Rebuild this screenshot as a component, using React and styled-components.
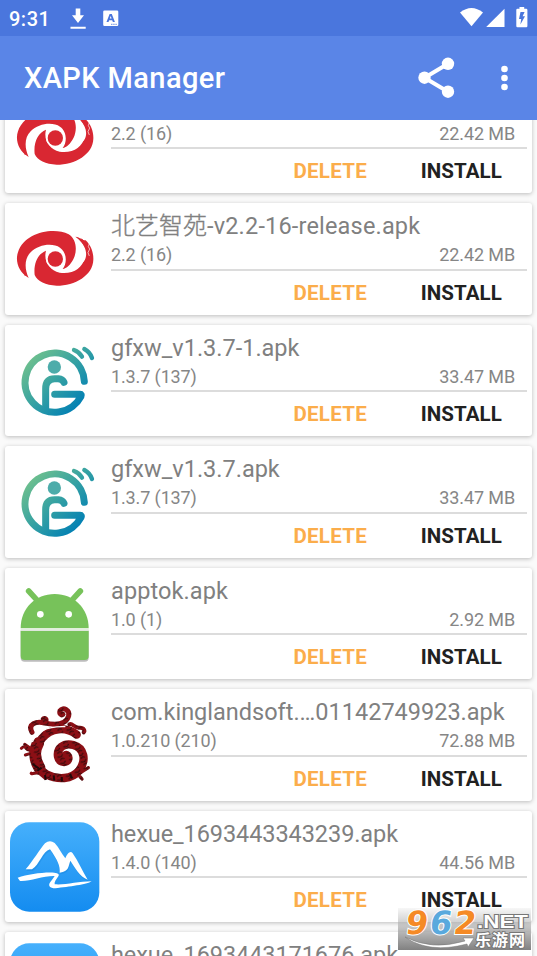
import React from 'react'
import styled, { createGlobalStyle } from 'styled-components'

const GlobalStyle = createGlobalStyle`
  body {
    margin: 0;
    background: #fafafa;
    font-family: Roboto, 'Noto Sans CJK SC', sans-serif;
  }
`

const Screen = styled.div`
  position: relative;
  display: flex;
  flex-direction: column;
  width: 537px;
  height: 956px;
  overflow: hidden;
`

const StatusBar = styled.div`
  flex: none;
  display: flex;
  align-items: center;
  height: 36px;
  box-sizing: border-box;
  padding: 0 9px 0 9px;
  background: #4a76dd;
  color: #fff;
`

const Clock = styled.span`
  width: 61px;
  font-size: 20px;
  line-height: 36px;
  font-weight: 500;
  letter-spacing: 0.5px;
  padding-top: 1px;
`

const StatusIcons = styled.svg`
  display: block;
  margin-left: ${({ $push }) => ($push ? 'auto' : 0)};
`

const AppBar = styled.div`
  flex: none;
  display: flex;
  align-items: center;
  height: 83.5px;
  box-sizing: border-box;
  padding: 0 27.5px 0 24px;
  background: #5a85e7;
  color: #fff;
`

const AppTitle = styled.h1`
  flex: 1;
  margin: 0;
  font-size: 29px;
  font-weight: 500;
  line-height: 40px;
  letter-spacing: 0.4px;
`

const List = styled.div`
  flex: 1;
  overflow: hidden;
`

const Cards = styled.div`
  display: flex;
  flex-direction: column;
  gap: 10px;
  margin: -38px 5px 0;
`

const Card = styled.div`
  flex: none;
  display: flex;
  height: 111.5px;
  box-sizing: border-box;
  padding: 0 5px;
  border-radius: 3px;
  background: #fff;
  box-shadow: 0 1px 4px rgba(0, 0, 0, 0.25);
`

const Icon = styled.svg`
  flex: none;
  width: 90px;
  height: 90px;
  margin: 11px 11px 0 0;
  overflow: visible;
`

const Info = styled.div`
  flex: 1;
  min-width: 0;
`

const Name = styled.div`
  height: 39px;
  padding-top: 3px;
  box-sizing: border-box;
  line-height: 40px;
  font-size: 23.5px;
  letter-spacing: ${({ $spacing }) => $spacing || 0}px;
  color: #808080;
  white-space: nowrap;
`

/* a hairline stroke brings the light hanzi up to the weight of the latin text */
const Hanzi = styled.span`
  font-family: 'Noto Sans CJK SC', sans-serif;
  font-weight: 300;
  font-size: 24px;
  line-height: 1;
  letter-spacing: 0;
  -webkit-text-stroke: 0.35px #808080;
`

const Meta = styled.div`
  display: flex;
  justify-content: space-between;
  height: 28.5px;
  box-sizing: border-box;
  padding-right: 12px;
  line-height: 26px;
  font-size: 18px;
  letter-spacing: -0.12px;
  color: #868686;
  border-bottom: 2px solid #dcdcdc;
`

const Actions = styled.div`
  display: flex;
  justify-content: flex-end;
  gap: 53.5px;
  padding: 9px 25px 0 0;
`

const Action = styled.span`
  font-size: 20.5px;
  line-height: 26px;
  font-weight: 700;
  letter-spacing: ${({ $accent }) => ($accent ? 0.3 : 0.1)}px;
  color: ${({ $accent }) => ($accent ? '#fbad4b' : '#212121')};
`

const Watermark = styled.div`
  position: absolute;
  left: 398px;
  top: 908px;
  width: 133px;
  height: 42px;
  background: linear-gradient(rgba(200, 200, 200, 0.15), rgba(170, 170, 170, 0.75) 50%, rgba(125, 125, 125, 0.97));
`

const SwirlIcon = () => (
  <Icon viewBox="0 0 270 270">
    <g fill="#d92732">
      <path d="M56 192C25 175 15 140 24 115C42 56 130 38 176 61C201 76 202 113 190 136C181 153 170 164 158 165C172 148 171 115 150 101C128 86 85 91 62 115C43 133 43 165 56 192Z" />
      <path d="M74 183C70 148 84 119 108 110C100 139 117 169 149 176C190 181 216 163 224 132C229 107 219 85 196 68C211 70 219 80 227 79C242 93 251 115 250 137C249 184 195 215 140 215C107 214 82 202 74 183Z" />
      <circle cx="136" cy="135" r="23" />
    </g>
    {/* white band on the right between the two arms */}
    <path d="M202 74C222 98 222 132 207 152C195 167 175 174 152 172C192 158 204 120 202 74Z" fill="#fff" />
    <path d="M204 76C228 96 235 122 222 142C210 160 185 170 160 170C190 160 208 135 204 76Z" fill="#fff" />
    <circle cx="136" cy="135" r="27" fill="none" stroke="#fff" strokeWidth="3" />
    <path d="M238 88l-3 10 4 7-5 11 4 10" fill="none" stroke="#fff" strokeWidth="2" />
    <path d="M214 74l9 9M43 178l3 8" stroke="#d92732" strokeWidth="3" />
  </Icon>
)

const RingIcon = () => (
  <Icon viewBox="0 0 270 270">
    <defs>
      <linearGradient id="ring" gradientUnits="userSpaceOnUse" x1="60" y1="60" x2="205" y2="205">
        <stop offset="0" stopColor="#70c18d" />
        <stop offset="0.5" stopColor="#38a3a2" />
        <stop offset="1" stopColor="#0582b3" />
      </linearGradient>
    </defs>
    <g fill="none" stroke="url(#ring)" strokeWidth="21" strokeLinecap="round" strokeLinejoin="round">
      <path d="M223 136A89 89 0 1 0 213 181Q216 175 210 175H134" />
      <path d="M107 218V158Q107 128 134 128H145Q158 129 162 139" />
      <path d="M192 42Q208 48 216 62M223 39Q240 48 246 66" strokeWidth="13" />
    </g>
    <circle cx="133" cy="93" r="20" fill="#4dacaa" />
  </Icon>
)

const RobotIcon = () => (
  <Icon viewBox="0 0 270 270">
    <path d="M32 151H236V233Q236 245 224 245H44Q32 245 32 233Z" fill="#bcbcbc" transform="translate(0 3)" />
    <g fill="#77c25a">
      <path d="M32 148C32 88 76 45 134 45C192 45 236 88 236 148Z" />
      <path d="M32 156H236V231Q236 243 224 243H44Q32 243 32 231Z" />
      <path d="M56 36L79 61M211 36L188 61" stroke="#77c25a" strokeWidth="17" strokeLinecap="round" />
    </g>
    <path d="M32 152H236" stroke="#e3eedf" strokeWidth="7" />
    <circle cx="91" cy="106" r="10" fill="#fff" />
    <circle cx="176" cy="106" r="10" fill="#fff" />
  </Icon>
)

const DragonIcon = () => (
  <Icon viewBox="0 0 270 270">
    <defs>
      <pattern id="scales" width="29" height="21" patternUnits="userSpaceOnUse" patternTransform="rotate(-24)">
        <rect width="29" height="21" fill="#8c0f15" />
        <path d="M2 5L13 8 20 3M6 16l8-3 6 4" fill="none" stroke="#3a0a0c" strokeWidth="3.5" />
      </pattern>
    </defs>
    <g fill="none" stroke="url(#scales)" strokeLinecap="round">
      <path d="M200 104C166 78 122 84 96 115C68 152 75 204 110 223C143 241 186 238 207 212C231 180 222 144 190 135C160 127 140 146 144 170C148 190 172 190 175 177C177 168 170 163 166 166" strokeWidth="25" strokeLinejoin="round" />
      <path d="M84 130C72 150 73 178 88 203" strokeWidth="36" />
      <path d="M66 97C52 72 79 62 104 69C137 76 169 73 176 48C180 29 159 20 150 32C147 41 154 47 159 43" strokeWidth="15" />
      <path d="M98 57C104 49 115 58 107 65M178 73C187 67 193 85 208 83C223 82 225 94 221 97" strokeWidth="12" />
      <path d="M60 151C45 152 49 132 34 145M59 161L46 165M61 145L44 133" strokeWidth="9" />
      <path d="M64 220C70 224 80 212 92 223L106 235M207 221L235 203M210 230L216 237" strokeWidth="10" />
    </g>
    <path d="M67 126C81 92 119 78 166 80" fill="none" stroke="#fff" strokeWidth="4" />
    <path d="M68 192l18 13M82 212l13-9M105 225l2 15M131 226l2 16M155 231l1 12M180 222l6 13" stroke="#210809" strokeWidth="6" />
  </Icon>
)

const MountainIcon = () => (
  <Icon viewBox="0 0 270 270">
    <defs>
      <linearGradient id="sky" x1="0" y1="0" x2="0" y2="1">
        <stop offset="0" stopColor="#46b0fc" />
        <stop offset="1" stopColor="#148cf0" />
      </linearGradient>
    </defs>
    <rect x="0" y="1" width="268" height="268" rx="58" fill="url(#sky)" />
    <path
      d="M47 142C67 120 91 79 105 64Q119 52 134 63C148 77 154 95 166 109C172 95 181 84 188 94C205 118 217 148 233 173C209 163 195 138 181 116C174 134 178 147 149 152C152 133 141 112 120 82C98 87 88 130 66 142Z"
      fill="#0872ca"
      opacity="0.25"
      transform="translate(2 5)"
    />
    <g fill="#fff">
      <path d="M47 142C67 120 91 79 105 64Q119 52 134 63C148 77 154 95 166 109C172 95 181 84 188 94C205 118 217 148 233 173C209 163 195 138 181 116C174 134 178 147 149 152C152 133 141 112 120 82C98 87 88 130 66 142Z" />
      <path d="M23 167C54 157 99 150 133 152Q151 154 145 163C139 172 132 180 134 187C164 190 205 178 245 178C231 188 177 194 136 199C119 199 113 190 121 180Q129 170 134 162C99 161 59 179 30 177Z" />
    </g>
  </Icon>
)

const icons = {
  swirl: SwirlIcon,
  ring: RingIcon,
  robot: RobotIcon,
  dragon: DragonIcon,
  mountain: MountainIcon,
}

const apks = [
  { id: 1, icon: 'swirl', hanzi: '北艺智苑', name: '-v2.2-16-release.apk', spacing: 0.18, version: '2.2 (16)', size: '22.42 MB' },
  { id: 2, icon: 'swirl', hanzi: '北艺智苑', name: '-v2.2-16-release.apk', spacing: 0.18, version: '2.2 (16)', size: '22.42 MB' },
  { id: 3, icon: 'ring', name: 'gfxw_v1.3.7-1.apk', version: '1.3.7 (137)', size: '33.47 MB' },
  { id: 4, icon: 'ring', name: 'gfxw_v1.3.7.apk', version: '1.3.7 (137)', size: '33.47 MB' },
  { id: 5, icon: 'robot', name: 'apptok.apk', spacing: 0.1, version: '1.0 (1)', size: '2.92 MB' },
  { id: 6, icon: 'dragon', name: 'com.kinglandsoft.…01142749923.apk', version: '1.0.210 (210)', size: '72.88 MB' },
  { id: 7, icon: 'mountain', name: 'hexue_1693443343239.apk', spacing: -0.08, version: '1.4.0 (140)', size: '44.56 MB' },
  { id: 8, icon: 'mountain', name: 'hexue_1693443171676.apk', spacing: -0.08, version: '1.4.0 (140)', size: '44.56 MB' },
]

const ApkCard = ({ apk }) => {
  const ApkIcon = icons[apk.icon]
  return (
    <Card>
      <ApkIcon />
      <Info>
        <Name $spacing={apk.spacing}>
          {apk.hanzi && <Hanzi>{apk.hanzi}</Hanzi>}
          {apk.name}
        </Name>
        <Meta>
          <span>{apk.version}</span>
          <span>{apk.size}</span>
        </Meta>
        <Actions>
          <Action $accent>DELETE</Action>
          <Action>INSTALL</Action>
        </Actions>
      </Info>
    </Card>
  )
}

const App = () => (
  <Screen>
    <GlobalStyle />
    <StatusBar>
      <Clock>9:31</Clock>
      <StatusIcons width="50" height="36" fill="#fff">
        <path d="M5.7 8.5h4.6v6.7h3.7L8 23l-6-7.8h3.7zM.5 26.7h15.2v2H.5z" />
        <path fillRule="evenodd" d="M34.5 10.5h12.5q1.3 0 1.3 1.3v13q0 1.3-1.3 1.3h-12.5q-1.3 0-1.3-1.3v-13q0-1.3 1.3-1.3zM39.6 14L36.5 22h2l.7-1.8h3l.7 1.8h2L41.8 14zM39.8 18.5l.9-2.6.9 2.6z" />
        <path d="M41 24.3h6" stroke="#4a76dd" strokeWidth="0.8" strokeDasharray="1.5 0.7" />
      </StatusIcons>
      <StatusIcons $push width="68" height="36" fill="#fff">
        <path d="M0 12.6Q11.5 3.5 23 12.6L11.5 26.3z" />
        <path d="M44.5 8.8V27H26.2z" />
        <path fillRule="evenodd" d="M59.5 7h4.7v1.8h2q1.2 0 1.2 1.2v16q0 1.2-1.2 1.2h-8.7q-1.2 0-1.2-1.2V10q0-1.2 1.2-1.2h2zM60.5 12l-1.5 7h2.2l-.8 5.5 4.6-8.3h-2.4l2-4.2z" />
      </StatusIcons>
    </StatusBar>
    <AppBar>
      <AppTitle>XAPK Manager</AppTitle>
      <svg width="92" height="44" fill="#fff">
        <path d="M30 7.8L6.5 21.7 30 35.7" fill="none" stroke="#fff" strokeWidth="4" />
        <circle cx="30" cy="7.8" r="6.2" />
        <circle cx="6.5" cy="21.7" r="6.2" />
        <circle cx="30" cy="35.7" r="6.2" />
        <circle cx="86.5" cy="13" r="3.3" />
        <circle cx="86.5" cy="22" r="3.3" />
        <circle cx="86.5" cy="31" r="3.3" />
      </svg>
    </AppBar>
    <List>
      <Cards>
        {apks.map(apk => (
          <ApkCard key={apk.id} apk={apk} />
        ))}
      </Cards>
    </List>
    <Watermark>
      <svg width="133" height="42" fontFamily="'Liberation Sans', 'Noto Sans CJK SC', sans-serif" fontWeight="700">
        <g fontFamily="'DejaVu Sans', sans-serif" fontSize="32" stroke="#fff" strokeWidth="2" paintOrder="stroke" transform="translate(5 0) skewX(-8)">
          <text x="5" y="25.5" fill="#f58a25">9</text>
          <text x="29" y="25.5" fill="#59a9dd">6</text>
          <text x="53" y="25.5" fill="#f58a25">2</text>
        </g>
        <path d="M7 29Q34 43 67 33L65 30 76 30 70 39 69 36Q31 46 7 29Z" fill="#fff" stroke="#777" strokeWidth="0.5" />
        <g fill="#fff" stroke="#777" strokeWidth="2" paintOrder="stroke">
          <text x="79" y="20" fontSize="19" textLength="51" lengthAdjust="spacingAndGlyphs">.NET</text>
          <text x="77" y="38" fontSize="16" textLength="50">乐游网</text>
        </g>
      </svg>
    </Watermark>
  </Screen>
)

export default App
